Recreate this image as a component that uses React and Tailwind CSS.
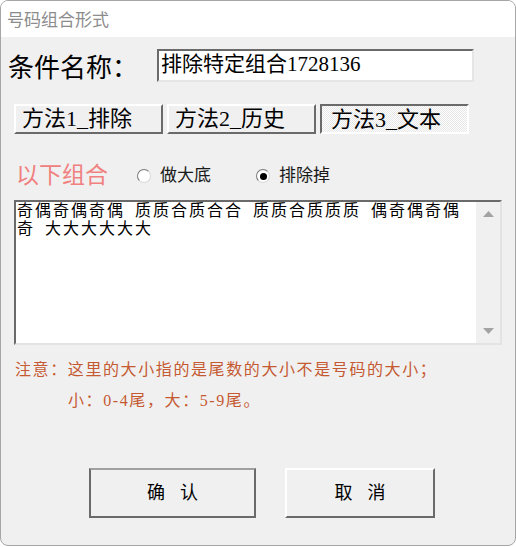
import React from "react";

const font = "font-['Liberation_Serif','Noto_Sans_CJK_SC',serif]";

const MethodButton = ({ label, pressed, onClick }) => (
  <button
    type="button"
    onClick={onClick}
    className={
      pressed
        ? "w-[149px] h-[30px] text-left pl-[9px] pt-[1px] text-[22px] leading-[26px] text-black border-2 border-t-[#6a6a6a] border-l-[#6a6a6a] border-r-[#ffffff] border-b-[#ffffff] bg-[repeating-conic-gradient(#ffffff_0_25%,#e6e6e6_0_50%)] bg-[length:2px_2px]"
        : "w-[149px] h-[30px] text-left pl-[6px] text-[22px] leading-[26px] text-black bg-[#f0f0f0] border-2 border-t-[#ffffff] border-l-[#ffffff] border-r-[#6a6a6a] border-b-[#6a6a6a]"
    }
  >
    {label}
  </button>
);

const Radio = ({ label, checked, onClick }) => (
  <div className="flex items-center cursor-default" onClick={onClick}>
    <div className="w-[14px] h-[14px] rounded-full bg-white border border-t-[#7a7a7a] border-l-[#7a7a7a] border-r-[#d8d8d8] border-b-[#d8d8d8] flex items-center justify-center">
      {checked && <div className="w-[7px] h-[7px] rounded-full bg-black" />}
    </div>
    <span className="ml-[9px] text-[17px] leading-[20px] text-[#1a1a1a]">{label}</span>
  </div>
);

const App = () => {
  const [Method, setMethod] = React.useState(3);
  const [Mode, setMode] = React.useState("1");

  const groups = ["奇偶奇偶奇偶", "质质合质合合", "质质合质质质", "偶奇偶奇偶"];

  return (
    <div className={`w-[516px] h-[547px] bg-white ${font}`}>
      <div className="w-[516px] h-[546px] border border-[#a6a6a6] rounded-lg overflow-hidden flex flex-col bg-[#f0f0f0]">
        {/* title bar */}
        <div className="h-[36px] bg-white flex items-center pl-[6px] shrink-0">
          <span className="text-[17px] text-[#8c8c8c] font-['Noto_Sans_CJK_SC',sans-serif]">号码组合形式</span>
        </div>

        {/* name row */}
        <div className="flex mt-[12px]">
          <div className="ml-[7px] w-[149px] mt-[6px] text-[26px] leading-[28px] text-black">条件名称：</div>
          <div className="w-[317px] h-[33px] bg-white border-2 border-t-[#6a6a6a] border-l-[#6a6a6a] border-r-[#e6e6e6] border-b-[#e6e6e6] pl-[2px] text-[21px] leading-[26px] text-black">
            排除特定组合1728136
          </div>
        </div>

        {/* method buttons */}
        <div className="flex gap-[4px] ml-[13px] mt-[21px]">
          <MethodButton label="方法1_排除" pressed={Method === 1} onClick={() => setMethod(1)} />
          <MethodButton label="方法2_历史" pressed={Method === 2} onClick={() => setMethod(2)} />
          <MethodButton label="方法3_文本" pressed={Method === 3} onClick={() => setMethod(3)} />
        </div>

        {/* combination row */}
        <div className="flex items-center h-[24px] mt-[30px]">
          <div className="ml-[15px] w-[121px] text-[23px] leading-[24px] text-[#f08080]">以下组合</div>
          <Radio label="做大底" checked={Mode === "0"} onClick={() => setMode("0")} />
          <div className="ml-[45px]">
            <Radio label="排除掉" checked={Mode === "1"} onClick={() => setMode("1")} />
          </div>
        </div>

        {/* text area */}
        <div className="flex ml-[13px] mt-[12px] w-[488px] h-[145px] bg-white border-2 border-t-[#6a6a6a] border-l-[#6a6a6a] border-r-[#e3e3e3] border-b-[#e3e3e3]">
          <div className="flex-1 pl-[1px] text-[16px] leading-[18px] tracking-[2px] text-black">
            <div className="flex">
              {groups.map((g, k) => (
                <span key={k} className="mr-[10px]">
                  {g}
                </span>
              ))}
            </div>
            <div className="flex">
              <span className="mr-[10px]">奇</span>
              <span>大大大大大大</span>
            </div>
          </div>
          <div className="w-[24px] bg-[#f0f0f0] flex flex-col items-center justify-between py-[9px]">
            <svg width="11" height="6" viewBox="0 0 11 6">
              <polygon points="0,6 5.5,0 11,6" fill="#a3a3a3" />
            </svg>
            <svg width="11" height="6" viewBox="0 0 11 6">
              <polygon points="0,0 11,0 5.5,6" fill="#a3a3a3" />
            </svg>
          </div>
        </div>

        {/* notes */}
        <div className="ml-[14px] mt-[16px] text-[16px] leading-[18px] tracking-[1.6px] text-[#c55a32]">
          注意：这里的大小指的是尾数的大小不是号码的大小；
        </div>
        <div className="ml-[67px] mt-[13px] text-[16px] leading-[18px] tracking-[1.6px] text-[#c55a32]">
          小：0-4尾，大：5-9尾。
        </div>

        {/* actions */}
        <div className="flex mt-[58px] ml-[88px] gap-[29px]">
          <button
            type="button"
            className="w-[167px] h-[50px] flex items-center justify-center gap-[15px] text-[18px] text-black bg-[#f0f0f0] border-2 border-t-[#a0a0a0] border-l-[#6a6a6a] border-r-[#6a6a6a] border-b-[#6a6a6a]"
          >
            <span>确</span>
            <span>认</span>
          </button>
          <button
            type="button"
            className="w-[150px] h-[50px] flex items-center justify-center gap-[15px] text-[18px] text-black bg-[#f0f0f0] border-2 border-t-[#ffffff] border-l-[#ffffff] border-r-[#6a6a6a] border-b-[#6a6a6a]"
          >
            <span>取</span>
            <span>消</span>
          </button>
        </div>
      </div>
    </div>
  );
};

export default App;
